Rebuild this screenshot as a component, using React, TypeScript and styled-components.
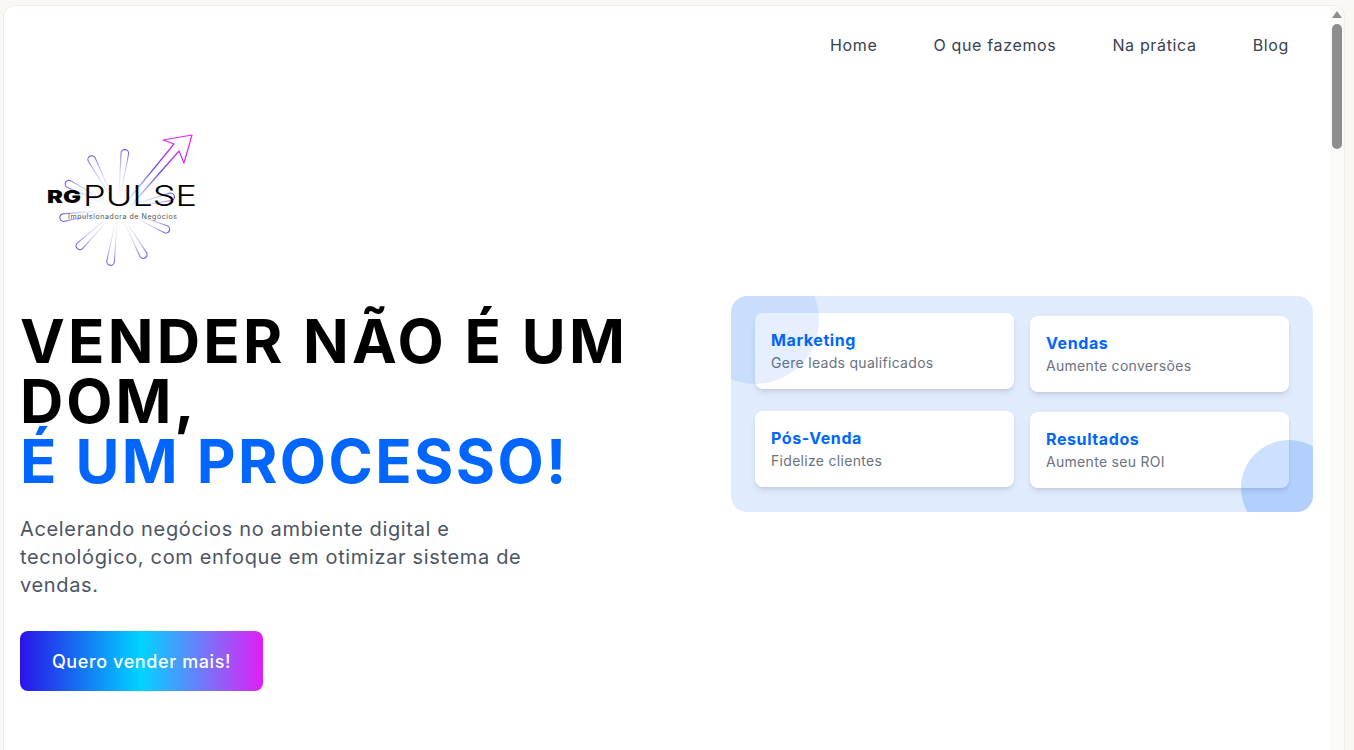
import { createGlobalStyle, styled } from "styled-components";

const GlobalStyle = createGlobalStyle`
  html, body {
    margin: 0;
    padding: 0;
    height: 100%;
    overflow: hidden;
    background: #f9f8f4;
  }
  * { box-sizing: border-box; }
`;

const Frame = styled.div`
  width: 1354px;
  height: 750px;
  padding: 5px 9px 0 3px;
  overflow: hidden;
`;

const Window = styled.div`
  display: flex;
  height: 745px;
  background: #fff;
  border: 1px solid #eeede6;
  border-bottom: none;
  border-radius: 12px 12px 0 0;
  overflow: hidden;
  font-family: Inter, "Liberation Sans", sans-serif;
`;

const Page = styled.main`
  flex: 1;
  min-width: 0;
`;

const ScrollTrack = styled.div`
  width: 14px;
  flex: none;
  background: #fafaf8;
  display: flex;
  flex-direction: column;
  align-items: center;
  padding: 5px 1px 0 0;
`;

const ScrollArrow = styled.div`
  width: 0;
  height: 0;
  border-left: 5px solid transparent;
  border-right: 5px solid transparent;
  border-bottom: 7px solid #8d8d8d;
`;

const ScrollThumb = styled.div`
  width: 10px;
  height: 125px;
  margin-top: 6px;
  border-radius: 5px;
  background: #8d8d8d;
`;

const Nav = styled.nav`
  display: flex;
  justify-content: flex-end;
  align-items: center;
  gap: 56px;
  height: 78px;
  padding: 0 41px 0 0;
  margin-bottom: 1px;
`;

const NavLink = styled.a`
  font-size: 16px;
  font-weight: 400;
  letter-spacing: 0.65px;
  color: #374151;
`;

const Hero = styled.section`
  display: grid;
  grid-template-columns: 1fr 582px;
  align-items: center;
  padding: 33px 17px 0 16px;
`;

const HeroText = styled.div`
  display: flex;
  flex-direction: column;
  align-items: flex-start;
`;

const LogoSvg = styled.svg`
  display: block;
  width: 180px;
  height: 160px;
  margin: 5px 0 28px 20px;
`;

const Heading = styled.h1`
  margin: 0;
  font-size: 60px;
  line-height: 60px;
  font-weight: 700;
  color: #000;
`;

const HeadingLine = styled.span<{ $accent?: boolean; $tracking: number }>`
  display: block;
  letter-spacing: ${(p) => p.$tracking}px;
  color: ${(p) => (p.$accent ? "#0066ff" : "#000")};
`;

const Lead = styled.p`
  margin: 24px 0 32px;
  width: 512px;
  font-size: 20px;
  line-height: 28px;
  letter-spacing: 0.66px;
  color: #4b5563;
`;

const Cta = styled.button`
  width: 243px;
  height: 60px;
  border: none;
  border-radius: 8px;
  background: linear-gradient(90deg, #2a14e8 0%, #00d4ff 50%, #e01ff5 100%);
  color: #fff;
  font-family: inherit;
  font-size: 18px;
  font-weight: 500;
  letter-spacing: 0.6px;
`;

const Panel = styled.div`
  position: relative;
  display: grid;
  grid-template-columns: 259px 259px;
  gap: 16px;
  height: 216px;
  margin-bottom: 1px;
  padding: 24px;
  border-radius: 16px;
  background: #e0ecfd;
  overflow: hidden;
`;

const Blob = styled.div<{ $corner: "start" | "end" }>`
  position: absolute;
  z-index: 1;
  border-radius: 50%;
  ${(p) =>
    p.$corner === "start"
      ? "top: -40px; left: -40px; width: 128px; height: 128px; background: rgba(0, 102, 255, 0.1);"
      : "right: -24px; bottom: -24px; width: 96px; height: 96px; background: rgba(0, 102, 255, 0.2);"}
`;

const Card = styled.div<{ $lift: number }>`
  height: 76px;
  padding: 16px;
  border-radius: 8px;
  background: #fff;
  box-shadow: 0 4px 6px -1px rgba(0, 0, 0, 0.1), 0 2px 4px -2px rgba(0, 0, 0, 0.1);
  transform: translateY(${(p) => -p.$lift}px);
`;

const CardTitle = styled.h3`
  margin: 0 0 1px;
  font-size: 16px;
  line-height: 23px;
  font-weight: 700;
  letter-spacing: 0.6px;
  color: #0066ff;
`;

const CardText = styled.p`
  margin: 0;
  font-size: 14px;
  line-height: 20px;
  letter-spacing: 0.3px;
  color: #6b7280;
`;

const navItems = ["Home", "O que fazemos", "Na prática", "Blog"];

const cards = [
  { title: "Marketing", text: "Gere leads qualificados", lift: 7 },
  { title: "Vendas", text: "Aumente conversões", lift: 4 },
  { title: "Pós-Venda", text: "Fidelize clientes", lift: 1 },
  { title: "Resultados", text: "Aumente seu ROI", lift: 0 },
];

// angle in degrees from straight up, length from the centre of the burst
const rays = [
  [-28, 60],
  [7, 60],
  [-63, 59],
  [-99, 59],
  [-134, 57],
  [188, 57],
  [151, 56],
  [113, 56],
  [77, 58],
];

function Logo() {
  return (
    <LogoSvg viewBox="40 122 180 160">
      <defs>
        <linearGradient id="ray" x1="0" y1="0" x2="0" y2="1">
          <stop offset="0" stopColor="#5a50f0" />
          <stop offset="0.3" stopColor="#a5a0f7" stopOpacity="0.7" />
          <stop offset="0.8" stopColor="#d6d4fc" stopOpacity="0.25" />
          <stop offset="1" stopColor="#e6e5fd" stopOpacity="0" />
        </linearGradient>
        <linearGradient id="arrow" gradientUnits="userSpaceOnUse" x1="125" y1="205" x2="190" y2="136">
          <stop offset="0" stopColor="#6a5cf2" stopOpacity="0" />
          <stop offset="0.5" stopColor="#5b4df0" />
          <stop offset="0.72" stopColor="#c02cee" />
          <stop offset="1" stopColor="#f01ff0" />
        </linearGradient>
      </defs>
      {rays.map(([angle, length]) => (
        <path
          key={angle}
          transform={`translate(118 208) rotate(${angle})`}
          d={`M-0.4 -8 L-3.8 ${-length + 4} A3.8 3.8 0 0 1 3.8 ${-length + 4} L0.4 -8`}
          fill="none"
          stroke="url(#ray)"
          strokeWidth="1.1"
        />
      ))}
      <path
        d="M124 204 L174 143 L163 139 L192 134 L184 162 L179 150 L128 208"
        fill="none"
        stroke="url(#arrow)"
        strokeWidth="1.2"
        strokeLinejoin="round"
      />
      <text x="47" y="202" fontFamily="Inter, sans-serif" fontWeight="900" fontSize="18" textLength="34" lengthAdjust="spacingAndGlyphs" fill="#000">
        RG
      </text>
      <text x="83" y="205" fontFamily="Inter, sans-serif" fontWeight="300" fontSize="28" textLength="114" lengthAdjust="spacingAndGlyphs" fill="#000">
        PULSE
      </text>
      <text x="68" y="218" fontFamily="Inter, sans-serif" fontSize="7" textLength="109" lengthAdjust="spacing" fill="#555">
        Impulsionadora de Negócios
      </text>
    </LogoSvg>
  );
}

export default function App() {
  return (
    <Frame>
      <GlobalStyle />
      <Window>
        <Page>
          <Nav>
            {navItems.map((item) => (
              <NavLink key={item}>{item}</NavLink>
            ))}
          </Nav>
          <Hero>
            <HeroText>
              <Logo />
              <Heading>
                <HeadingLine $tracking={3.25}>VENDER NÃO É UM</HeadingLine>
                <HeadingLine $tracking={3}>DOM,</HeadingLine>
                <HeadingLine $accent $tracking={2.4}>
                  É UM PROCESSO!
                </HeadingLine>
              </Heading>
              <Lead>Acelerando negócios no ambiente digital e tecnológico, com enfoque em otimizar sistema de vendas.</Lead>
              <Cta>Quero vender mais!</Cta>
            </HeroText>
            <Panel>
              <Blob $corner="start" />
              {cards.map((card) => (
                <Card key={card.title} $lift={card.lift}>
                  <CardTitle>{card.title}</CardTitle>
                  <CardText>{card.text}</CardText>
                </Card>
              ))}
              <Blob $corner="end" />
            </Panel>
          </Hero>
        </Page>
        <ScrollTrack>
          <ScrollArrow />
          <ScrollThumb />
        </ScrollTrack>
      </Window>
    </Frame>
  );
}
